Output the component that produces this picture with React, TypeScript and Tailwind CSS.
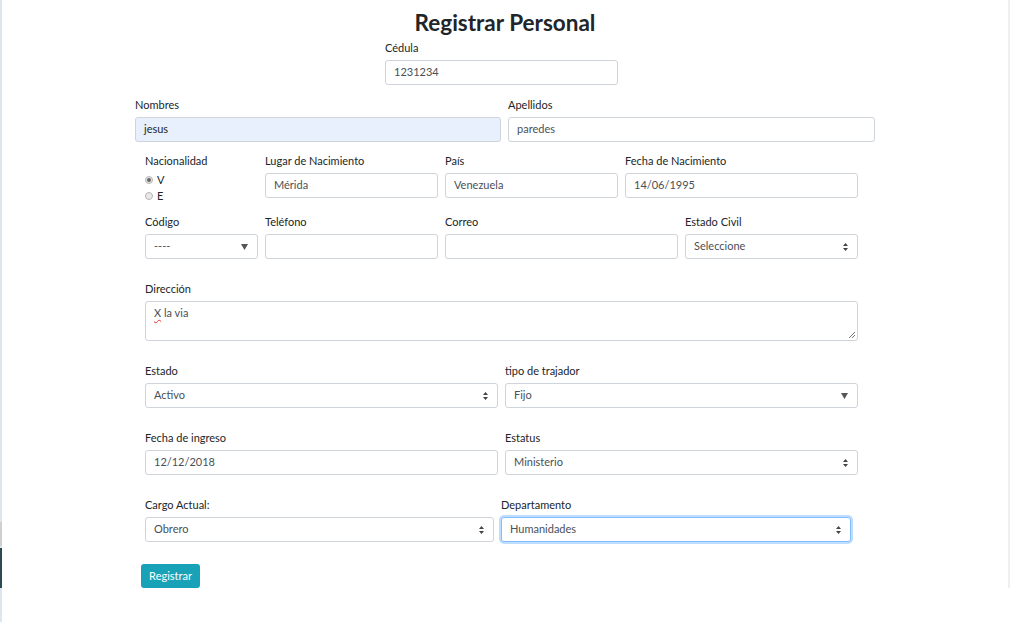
import type { ReactNode } from "react";

const FONT = "font-['Lato','Open_Sans',sans-serif]";

function Label({ children }: { children: ReactNode }) {
  return (
    <div className="mb-[3px] h-[18px] text-[11px] leading-[18px] text-[#212529]">
      {children}
    </div>
  );
}

function Box({
  value = "",
  autofill = false,
  focus = false,
  arrow,
}: {
  value?: string;
  autofill?: boolean;
  focus?: boolean;
  arrow?: "down" | "updown";
}) {
  return (
    <div
      className={[
        "flex h-[25px] items-center justify-between rounded-[3px] border pl-2 pr-[9px] text-[11px] text-[#495057]",
        autofill ? "bg-[#e8f0fe]" : "bg-white",
        focus
          ? "border-[#80bdff] shadow-[0_0_0_2px_rgba(0,123,255,0.25)]"
          : "border-[#ced4da]",
      ].join(" ")}
    >
      <span className={autofill ? "text-[#212529]" : ""}>{value}</span>
      {arrow === "down" ? (
        <svg width="7" height="6" viewBox="0 0 7 6" aria-hidden>
          <path d="M0 0h7L3.5 6z" fill="#555" />
        </svg>
      ) : null}
      {arrow === "updown" ? (
        <svg width="5" height="8" viewBox="0 0 5 8" aria-hidden>
          <path d="M2.5 0L5 3H0zM2.5 8L0 5h5z" fill="#444" />
        </svg>
      ) : null}
    </div>
  );
}

function Field({
  label,
  width,
  ...box
}: {
  label: string;
  width: string;
  value?: string;
  autofill?: boolean;
  focus?: boolean;
  arrow?: "down" | "updown";
}) {
  return (
    <div className={width}>
      <Label>{label}</Label>
      <Box {...box} />
    </div>
  );
}

function Radio({ label, checked }: { label: string; checked?: boolean }) {
  return (
    <div className="flex h-4 items-center gap-[4px] text-[11px] text-[#212529]">
      <span className="flex size-[8px] items-center justify-center rounded-full border border-[#b5b5b5] bg-[#e9e9e9]">
        {checked ? <span className="size-[4px] rounded-full bg-[#666]" /> : null}
      </span>
      {label}
    </div>
  );
}

export default function App() {
  return (
    <div className={`flex min-h-[622px] w-[1012px] bg-white ${FONT}`}>
      <div className="flex w-[2px] flex-col bg-[#dde6f0]">
        <div className="h-[522px]" />
        <div className="h-[24px] bg-[#cfcfcf]" />
        <div className="h-[2px]" />
        <div className="h-[40px] bg-[#2c4a52]" />
      </div>

      <main className="flex-1">
        <h1 className="pt-[9px] text-center text-[22.5px] font-bold leading-[28px] text-[#212529]">
          Registrar Personal
        </h1>

        <div className="mt-[2px] ml-[383px] w-[233px]">
          <Field label="Cédula" width="w-[233px]" value="1231234" />
        </div>

        <div className="mt-[11px] ml-[133px] flex gap-[7px]">
          <Field label="Nombres" width="w-[366px]" value="jesus" autofill />
          <Field label="Apellidos" width="w-[367px]" value="paredes" />
        </div>

        <div className="mt-[10px] ml-[143px] flex h-[46px] gap-[7px]">
          <div className="w-[113px]">
            <div className="h-[18px] text-[11px] leading-[18px] text-[#212529]">
              Nacionalidad
            </div>
            <div className="mt-[2px]">
              <Radio label="V" checked />
              <Radio label="E" />
            </div>
          </div>
          <Field label="Lugar de Nacimiento" width="w-[173px]" value="Mérida" />
          <Field label="País" width="w-[173px]" value="Venezuela" />
          <Field label="Fecha de Nacimiento" width="w-[233px]" value="14/06/1995" />
        </div>

        <div className="mt-[15px] ml-[143px] flex gap-[7px]">
          <Field label="Código" width="w-[113px]" value="----" arrow="down" />
          <Field label="Teléfono" width="w-[173px]" />
          <Field label="Correo" width="w-[233px]" />
          <Field
            label="Estado Civil"
            width="w-[173px]"
            value="Seleccione"
            arrow="updown"
          />
        </div>

        <div className="mt-[21px] ml-[143px] w-[713px]">
          <Label>Dirección</Label>
          <div className="relative h-[40px] rounded-[3px] border border-[#ced4da] px-2 pt-[3px] text-[11px] leading-[16px] text-[#495057]">
            <span className="underline decoration-[#e03131] decoration-wavy decoration-1 underline-offset-2">
              X
            </span>{" "}
            la via
            <svg
              className="absolute right-[1px] bottom-[1px]"
              width="8"
              height="8"
              viewBox="0 0 8 8"
              aria-hidden
            >
              <path d="M7 1L1 7M7 4L4 7" stroke="#777" strokeWidth="1" />
            </svg>
          </div>
        </div>

        <div className="mt-[21px] ml-[143px] flex gap-[7px]">
          <Field label="Estado" width="w-[353px]" value="Activo" arrow="updown" />
          <Field
            label="tipo de trajador"
            width="w-[353px]"
            value="Fijo"
            arrow="down"
          />
        </div>

        <div className="mt-[21px] ml-[143px] flex gap-[7px]">
          <Field label="Fecha de ingreso" width="w-[353px]" value="12/12/2018" />
          <Field
            label="Estatus"
            width="w-[353px]"
            value="Ministerio"
            arrow="updown"
          />
        </div>

        <div className="mt-[21px] ml-[143px] flex gap-[7px]">
          <Field
            label="Cargo Actual:"
            width="w-[349px]"
            value="Obrero"
            arrow="updown"
          />
          <Field
            label="Departamento"
            width="w-[350px]"
            value="Humanidades"
            arrow="updown"
            focus
          />
        </div>

        <button
          type="button"
          className="mt-[22px] ml-[139px] h-[24px] w-[59px] rounded-[3px] bg-[#17a2b8] text-center text-[11px] text-white"
        >
          Registrar
        </button>
      </main>

      <div className="h-[588px] w-[4px] border-l-[2px] border-[#efefef]" />
    </div>
  );
}
